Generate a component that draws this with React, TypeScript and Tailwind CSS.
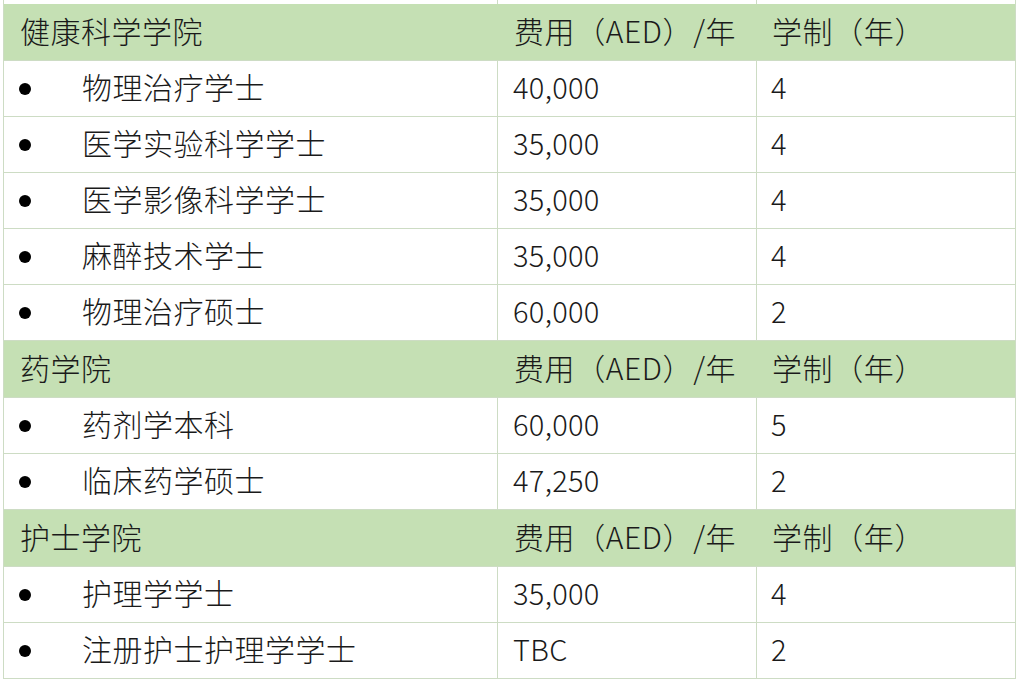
import React from "react";

type Row = { name: string; fee: string; years: string };
type Section = { title: string; rows: Row[] };

const sections: Section[] = [
  {
    title: "健康科学学院",
    rows: [
      { name: "物理治疗学士", fee: "40,000", years: "4" },
      { name: "医学实验科学学士", fee: "35,000", years: "4" },
      { name: "医学影像科学学士", fee: "35,000", years: "4" },
      { name: "麻醉技术学士", fee: "35,000", years: "4" },
      { name: "物理治疗硕士", fee: "60,000", years: "2" },
    ],
  },
  {
    title: "药学院",
    rows: [
      { name: "药剂学本科", fee: "60,000", years: "5" },
      { name: "临床药学硕士", fee: "47,250", years: "2" },
    ],
  },
  {
    title: "护士学院",
    rows: [
      { name: "护理学学士", fee: "35,000", years: "4" },
      { name: "注册护士护理学学士", fee: "TBC", years: "2" },
    ],
  },
];

const grid = "grid grid-cols-[494px_259px_258px]";

const App = () => {
  return (
    <div
      className="w-[1019px] h-[687px] bg-white overflow-hidden text-[#1a1a1a]"
      style={{ fontFamily: '"Noto Sans CJK SC", "Noto Sans", sans-serif' }}
    >
      <div className="ml-[3px] w-[1013px] border-l border-r border-[#cddcc4]">
        {/* tail of the row above */}
        <div className={`${grid} h-[4px]`}>
          <div className="border-r border-[#cddcc4]" />
          <div className="border-r border-[#cddcc4]" />
          <div />
        </div>
        {sections.map((s) => (
          <div key={s.title}>
            <div
              className={`${grid} h-[57px] items-center pb-[4px] bg-[#c5e0b4] text-[30px] font-light border-b border-[#cddcc4]`}
            >
              <div className="pl-[16px] tracking-[0.5px]">{s.title}</div>
              <div className="pl-[16px] tracking-[0.6px]">费用（AED）/年</div>
              <div className="pl-[15px] tracking-[0.6px]">学制（年）</div>
            </div>
            {s.rows.map((r) => (
              <div
                key={r.name}
                className={`${grid} h-[56px] text-[30px] font-light border-b border-[#cddcc4]`}
              >
                <div className="flex items-center border-r border-[#cddcc4]">
                  <span className="ml-[15px] w-[12px] h-[12px] rounded-full bg-black" />
                  <span className="ml-[51px] pb-[4px] tracking-[0.5px]">{r.name}</span>
                </div>
                <div className="flex items-center pl-[15px] pb-[4px] border-r border-[#cddcc4] text-[29px] tracking-[0.3px]">
                  {r.fee}
                </div>
                <div className="flex items-center pl-[14px] pb-[4px] text-[29px]">
                  {r.years}
                </div>
              </div>
            ))}
          </div>
        ))}
      </div>
    </div>
  );
};

export default App;
